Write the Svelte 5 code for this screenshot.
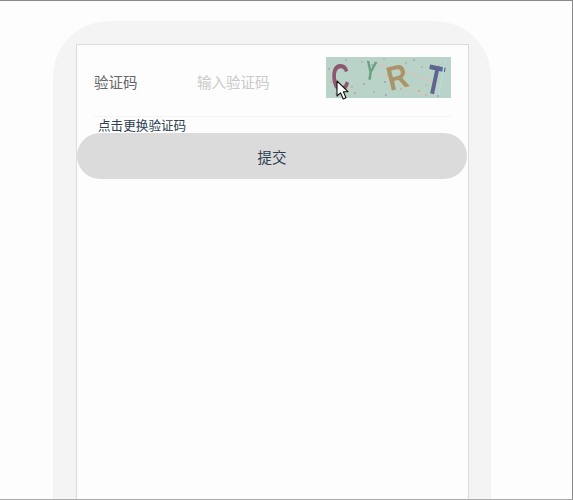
<script>
	const label = '验证码'
	const dots = [
		[3,12,'#b79ac0'],[20,3,'#b79ac0'],[36,5,'#c9a9a0'],[46,8,'#a99ac8'],[58,2,'#c9b0a0'],[38,27,'#a99ac8'],
		[26,30,'#c9a9a0'],[29,36,'#b79ac0'],[59,25,'#a99ac8'],[62,18,'#c9b0a0'],[80,6,'#a0b8a8'],[96,10,'#c9a9a0'],
		[100,28,'#c9b0a0'],[60,38,'#a99ac8'],[75,32,'#c9a9a0'],[88,3,'#a99ac8'],[113,9,'#c9b0a0'],[118,7,'#a99ac8'],
		[93,34,'#c9a9a0'],[112,39,'#a99ac8'],[100,38,'#c9b0a0'],[10,37,'#c9a9a0'],[48,35,'#a0b8a8'],[68,26,'#b79ac0'],[5,25,'#c9b0a0']
	]
	let code = $state('')
</script>

<div class="window">
	<div class="phone">
		<div class="screen">
			<div class="field">
				<span class="label">{label}</span>
				<input class="input" placeholder="输入验证码" bind:value={code} />
				<div class="captcha">
					<svg width="125" height="41" viewBox="0 0 125 41">
						<rect width="125" height="41" fill="#b9d3c9" />
						<line x1="50" y1="6" x2="118" y2="28" stroke="#e0bfb4" stroke-width="1" />
						<line x1="42" y1="12" x2="100" y2="38" stroke="#d8cbb0" stroke-width="1" />
						<line x1="20" y1="25" x2="26" y2="36" stroke="#d8cbb0" stroke-width="1" />
						{#each dots as [x, y, fill]}
							<circle cx={x} cy={y} r="1" {fill} />
						{/each}
						<text class="ch" font-size="38" fill="#8f566f" transform="translate(6 34) rotate(-3) scale(.66 1)">C</text>
						<text class="ch" font-size="27" fill="#66a27e" transform="translate(38 22) rotate(8) scale(.62 1)">Y</text>
						<text class="ch" font-size="34" fill="#ab9468" transform="translate(64 34) rotate(-14) scale(.85 1)">R</text>
						<text class="ch" font-size="41" fill="#5d6590" transform="translate(98 35) rotate(12) scale(.66 1)">T</text>
						<line x1="119" y1="3" x2="113" y2="38" stroke="#b4dbe2" stroke-width="1.5" />
					</svg>
				</div>
			</div>
			<div class="hint">点击更换验证码</div>
			<button class="submit">提交</button>
		</div>
	</div>
	<svg class="cursor" width="14" height="21" viewBox="0 0 14 21">
		<path d="M1 1 L1 16 L4.5 12.8 L7.2 19 L10 17.8 L7.4 11.8 L12 11.6 Z" fill="#fff" stroke="#111" stroke-width="1.1" stroke-linejoin="round" />
	</svg>
</div>

<style>
	:global(body) {
		background: #fdfdfd;
	}

	.window {
		position: relative;
		box-sizing: border-box;
		width: 573px;
		height: 500px;
		overflow: hidden;
		padding: 20px 0 0 53px;
		background: #fdfdfd;
		border-top: 1px solid #8a8a8a;
		border-right: 1px solid #8a8a8a;
		border-bottom: 1px solid #aaa;
		font-family: "Noto Sans CJK SC", "Liberation Sans", sans-serif;
	}

	.phone {
		box-sizing: border-box;
		width: 438px;
		height: 600px;
		padding: 23px 23px 0;
		background: #f4f4f4;
		border-radius: 56px 56px 0 0;
	}

	.screen {
		box-sizing: border-box;
		width: 393px;
		height: 560px;
		background: #fdfdfd;
		border: 1px solid #dcdcdc;
	}

	.field {
		display: flex;
		align-items: center;
		box-sizing: border-box;
		height: 72px;
		margin: 0 17px;
		padding-top: 12px;
		padding-bottom: 18px;
		border-bottom: 1px solid #f3f3f3;
	}

	.label {
		width: 103px;
		margin-top: 7px;
		font-size: 14.5px;
		color: #666;
	}

	.input {
		flex: 1;
		min-width: 0;
		margin-top: 7px;
		padding: 0;
		border: 0;
		outline: 0;
		background: transparent;
		font: inherit;
		font-size: 14.5px;
	}

	.input::placeholder {
		color: #cacaca;
	}

	.captcha {
		width: 125px;
		height: 41px;
	}

	.captcha svg {
		display: block;
		filter: blur(0.4px);
	}

	.ch {
		font-family: "Liberation Sans", sans-serif;
		font-weight: 700;
	}

	.hint {
		height: 16px;
		margin-left: 21px;
		font-size: 12.6px;
		line-height: 16px;
		color: #2c3e50;
	}

	.submit {
		display: block;
		width: 390px;
		height: 46px;
		padding: 0;
		border: 0;
		border-radius: 23px;
		background: #dbdbdb;
		font: inherit;
		font-size: 14.5px;
		color: #2c3e50;
	}

	.cursor {
		position: absolute;
		left: 336px;
		top: 79px;
	}
</style>
